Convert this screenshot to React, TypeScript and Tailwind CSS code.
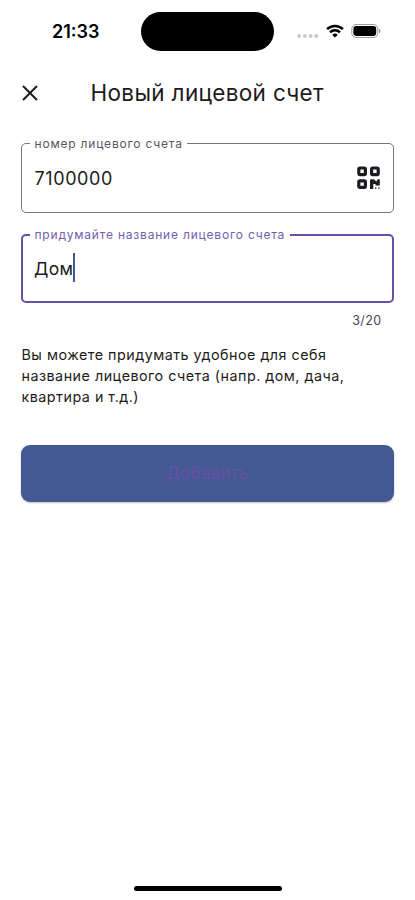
import React, { useState } from 'react';

const StatusBar: React.FC = () => (
  <div className="flex h-[62px] items-center">
    <div className="w-[141px] pl-[52px] pt-[2px] text-[18px] font-semibold leading-none text-black">21:33</div>
    <div className="h-[39px] w-[133px] rounded-full bg-black" />
    <div className="flex items-center pl-[23px]">
      <svg width="22" height="15" viewBox="0 0 22 15" fill="#c9c9cb">
        <circle cx="2.2" cy="12" r="2" />
        <circle cx="7.9" cy="12" r="2" />
        <circle cx="13.6" cy="12" r="2" />
        <circle cx="19.3" cy="12" r="2" />
      </svg>
      <svg className="ml-[7px]" width="18" height="14" viewBox="0 0 18 14" fill="none" stroke="#000" strokeWidth="2.5">
        <path d="M1.1 5.2a11.2 11.2 0 0 1 15.8 0" />
        <path d="M4 8.3a7.1 7.1 0 0 1 10 0" />
        <path d="M9 13.6 6.3 10.9a3.9 3.9 0 0 1 5.4 0z" fill="#000" stroke="none" />
      </svg>
      <svg className="ml-[7px]" width="30" height="14" viewBox="0 0 30 14">
        <rect x=".8" y=".5" width="26" height="13" rx="4.2" fill="none" stroke="#999" />
        <rect x="2.4" y="2.1" width="22.8" height="9.8" rx="2.8" fill="#000" />
        <path d="M28 5v4.2c.9-.4 1.4-1.2 1.4-2.1S28.9 5.4 28 5z" fill="#888" />
      </svg>
    </div>
  </div>
);

const QrIcon: React.FC = () => (
  <svg width="24" height="24" viewBox="0 0 24 24" fill="none" stroke="#1d1b20" strokeWidth="3.2">
    <rect x="1.8" y="2" width="6.6" height="6.6" rx="1.1" />
    <rect x="14.6" y="2" width="6.6" height="6.6" rx="1.1" />
    <rect x="1.8" y="14.8" width="6.6" height="6.6" rx="1.1" />
    <g fill="#1d1b20" stroke="none">
      <path d="M13 14.2q0-1 1-1h2.800l2.600 2.200 1.400-2.200h2v6.200h-4.300v-1.500h-2.200v5.100h-3.300z" />
      <rect x="18" y="21.5" width="1.3" height="1.3" />
      <rect x="21.3" y="21.5" width="1.3" height="1.3" />
    </g>
  </svg>
);

const NewAccount: React.FC = () => {
  const [name] = useState('Дом');

  return (
    <div className="h-[900px] w-[415px] overflow-hidden bg-white font-['Inter',sans-serif] text-[#1d1b20]">
      <div className="flex h-full flex-col">
        <StatusBar />

        {/* Header */}
        <header className="flex h-[62px] items-center pl-[22px]">
          <button className="w-[68.5px]" aria-label="Закрыть">
            <svg width="16" height="16" viewBox="0 0 16 16" fill="none" stroke="#1d1b20" strokeWidth="2">
              <path d="m1 1 14 14M15 1 1 15" />
            </svg>
          </button>
          <h1 className="whitespace-nowrap text-[22.5px] leading-none tracking-[0.33px]">Новый лицевой счет</h1>
        </header>

        <main className="px-[21px] pt-[11px]">
          {/* Account number */}
          <fieldset className="h-[78px] w-[373px] rounded-[5px] border border-[#79747e] pl-[8px]">
            <legend className="h-[17px] px-[4.5px] text-[12px] leading-[17px] tracking-[0.8px] text-[#5a5661]">
              номер лицевого счета
            </legend>
            <div className="flex h-[52px] items-center justify-between pl-[4.5px] pr-[12px]">
              <span className="text-[18px] tracking-[0.6px]">7100000</span>
              <QrIcon />
            </div>
          </fieldset>

          {/* Account name */}
          <fieldset className="mt-[13px] h-[77px] w-[373px] rounded-[5px] border-2 border-[#6750a4] pl-[7px]">
            <legend className="h-[17px] px-[4.5px] pt-px text-[12px] leading-[16px] tracking-[0.8px] text-[#7560ad]">
              придумайте название лицевого счета
            </legend>
            <div className="flex h-[48px] items-center pl-[4px]">
              <span className="pt-[4px] text-[17.5px] tracking-[0.3px]">{name}</span>
              <span className="h-[29px] w-[2px] bg-[#445994]" />
            </div>
          </fieldset>
          <div className="mt-[9px] pr-[12.5px] text-right text-[12.5px] leading-[17px] tracking-[0.4px] text-[#49454f]">
            {name.length}/20
          </div>

          <p className="mt-[15px] pl-[0.5px] text-[14.3px] leading-[21px] tracking-[0.5px]">
            Вы можете придумать удобное для себя
            <br />
            название лицевого счета (напр. дом, дача,
            <br />
            квартира и т.д.)
          </p>

          <button className="mt-[38px] h-[57px] w-[373px] rounded-[9px] bg-[#445994] text-[16.8px] tracking-[0.4px] text-[#6750a4] shadow-[0_1px_2px_rgba(0,0,0,0.25)]">
            Добавить
          </button>
        </main>

        <div className="mt-auto flex justify-center pb-[9px]">
          <div className="h-[5px] w-[148px] rounded-full bg-black" />
        </div>
      </div>
    </div>
  );
};

export default NewAccount;
